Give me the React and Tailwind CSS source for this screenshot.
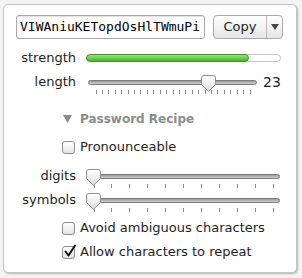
import React from "react";

const FONT = { fontFamily: '"DejaVu Sans", "Liberation Sans", sans-serif' };

function Thumb() {
  return (
    <svg width="15" height="17" viewBox="0 0 15 17" className="block">
      <defs>
        <linearGradient id="tg" x1="0" y1="0" x2="0" y2="1">
          <stop offset="0" stopColor="#ffffff" />
          <stop offset="1" stopColor="#dedede" />
        </linearGradient>
      </defs>
      <path
        d="M3 0.5 H12 Q14.5 0.5 14.5 3 V9.5 L7.5 16.3 L0.5 9.5 V3 Q0.5 0.5 3 0.5 Z"
        fill="url(#tg)"
        stroke="#8f8f8f"
        strokeWidth="1"
      />
    </svg>
  );
}

function Ticks({ width, count }) {
  const xs = [];
  for (let i = 0; i < count; i++) {
    xs.push(7.5 + (i * (width - 15)) / (count - 1));
  }
  return (
    <svg width={width} height="5" className="block">
      {xs.map((x, i) => (
        <line key={i} x1={Math.round(x) + 0.5} y1="0" x2={Math.round(x) + 0.5} y2="4" stroke="#8a8a8a" strokeWidth="1" />
      ))}
    </svg>
  );
}

function Slider({ width, thumbLeft, ticks }) {
  return (
    <div className="flex flex-col" style={{ width }}>
      <div className="relative h-[16px] flex items-center">
        <div className="w-full h-[5px] rounded-full border border-[#7d7d7d] bg-gradient-to-b from-[#9a9a9a] to-[#cfcfcf]" />
        <div className="absolute top-[1px]" style={{ left: thumbLeft }}>
          <Thumb />
        </div>
      </div>
      <Ticks width={width} count={ticks} />
    </div>
  );
}

function Checkbox({ checked }) {
  return (
    <div className="relative w-[13px] h-[13px] rounded-[3px] border border-[#8e8e8e] bg-gradient-to-b from-[#ffffff] to-[#e4e4e4] shrink-0">
      {checked && (
        <svg width="14" height="14" viewBox="0 0 14 14" className="absolute left-[0px] top-[-3px]">
          <path d="M2.5 7.5 L5.5 11.5 L12 1.5" fill="none" stroke="#111" strokeWidth="2" strokeLinecap="round" strokeLinejoin="round" />
        </svg>
      )}
    </div>
  );
}

export default function App() {
  return (
    <div className="w-[302px] h-[278px] bg-[#f4f4f4] pt-[4px] pl-[3px]" style={FONT}>
      <div className="w-[294px] h-[269px] bg-white border border-[#c4c4c4] rounded-[5px] shadow-[1px_1px_2px_rgba(0,0,0,0.25)] flex flex-col text-[13px] text-[#1e1e1e]">
        {/* row 1 */}
        <div className="flex pl-[12px] pt-[10px]">
          <div
            className="w-[189px] h-[24px] border border-[#a8a8a8] rounded-[3px] bg-white flex items-center pl-[3px] text-[13px] text-black shadow-[inset_0_1px_1px_rgba(0,0,0,0.12)]"
            style={{ fontFamily: '"DejaVu Sans Mono", "Liberation Mono", monospace' }}
          >
            VIWAniuKETopdOsHlTWmuPi
          </div>
          <div className="ml-[8px] w-[70px] h-[24px] border border-[#a9a9a9] rounded-[4px] bg-gradient-to-b from-[#ffffff] to-[#e6e6e6] flex items-stretch">
            <div className="w-[52px] flex items-center justify-center text-[13px] text-[#222]">Copy</div>
            <div className="w-px bg-[#b9b9b9]" />
            <div className="flex-1 flex items-center justify-center">
              <svg width="8" height="6" viewBox="0 0 8 6"><path d="M0 0 H8 L4 6 Z" fill="#444" /></svg>
            </div>
          </div>
        </div>

        {/* strength */}
        <div className="flex items-center h-[16px] mt-[11px]">
          <div className="w-[72px] text-right leading-[16px]">strength</div>
          <div className="ml-[10px] w-[195px] h-[8px] rounded-full border border-[#c4c4c4] bg-white flex">
            <div className="w-[163px] h-[8px] -mt-px -ml-px rounded-full border border-[#3f9b25] bg-gradient-to-b from-[#9ae07a] to-[#4cb12c]" />
          </div>
        </div>

        {/* length */}
        <div className="flex items-start mt-[8px]">
          <div className="w-[72px] text-right leading-[16px] h-[16px]">length</div>
          <div className="ml-[12px]">
            <Slider width={169} thumbLeft={113} ticks={25} />
          </div>
          <div className="ml-[6px] leading-[16px] text-[14px]">23</div>
        </div>

        {/* password recipe */}
        <div className="flex items-center h-[16px] mt-[16px] pl-[59px] text-[#8c8c8c] font-bold text-[12px]">
          <svg width="9" height="8" viewBox="0 0 9 8" className="mr-[8px]"><path d="M0 0 H9 L4.5 8 Z" fill="#8c8c8c" /></svg>
          <span>Password Recipe</span>
        </div>

        {/* pronounceable */}
        <div className="flex items-center h-[16px] mt-[12px] pl-[58px]">
          <Checkbox />
          <span className="ml-[5px]">Pronounceable</span>
        </div>

        {/* digits */}
        <div className="flex items-start mt-[13px]">
          <div className="w-[72px] text-right leading-[16px] h-[16px]">digits</div>
          <div className="ml-[10px]">
            <Slider width={194} thumbLeft={0} ticks={11} />
          </div>
        </div>

        {/* symbols */}
        <div className="flex items-start mt-[3px]">
          <div className="w-[72px] text-right leading-[16px] h-[16px]">symbols</div>
          <div className="ml-[10px]">
            <Slider width={194} thumbLeft={0} ticks={11} />
          </div>
        </div>

        {/* avoid */}
        <div className="flex items-center h-[16px] mt-[7px] pl-[58px]">
          <Checkbox />
          <span className="ml-[5px]">Avoid ambiguous characters</span>
        </div>

        {/* allow */}
        <div className="flex items-center h-[16px] mt-[8px] pl-[58px]">
          <Checkbox checked />
          <span className="ml-[5px]">Allow characters to repeat</span>
        </div>
      </div>
    </div>
  );
}
